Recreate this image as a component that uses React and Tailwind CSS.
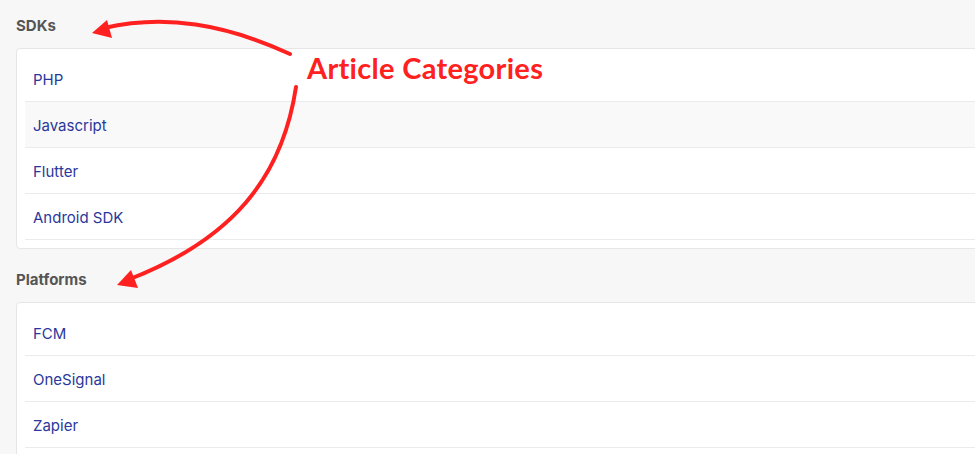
import React from 'react';

const groups = [
  { title: 'SDKs', items: ['PHP', 'Javascript', 'Flutter', 'Android SDK'] },
  { title: 'Platforms', items: ['FCM', 'OneSignal', 'Zapier'] },
];

function CategoryList({ title, items, first }) {
  return (
    <section className={first ? '' : 'mt-5'}>
      <h2 className="pl-4 text-[15px] font-bold leading-[22px] text-[#555555]">{title}</h2>
      <div className="ml-4 mt-[11px] w-[1100px] rounded border border-[#e6e6e6] bg-white px-2 pb-2 pt-[7px]">
        {items.map((item, i) => (
          <a
            key={item}
            href="#"
            className={`flex h-[46px] items-center border-b border-[#ebebeb] px-2 pt-[3px] text-[15px] text-[#2a389b] ${
              first && i === 1 ? 'bg-[#f9f9f9]' : ''
            }`}
          >
            {item}
          </a>
        ))}
      </div>
    </section>
  );
}

function Annotation() {
  return (
    <div className="pointer-events-none absolute inset-0">
      <svg width="975" height="454" className="absolute left-0 top-0">
        <path d="M290 54 C 225 24, 165 14, 104 28" fill="none" stroke="#ff2020" strokeWidth="4" strokeLinecap="round" />
        <polygon points="92,33 107,20 112,38" fill="#ff2020" />
        <path d="M296 87 C 282 180, 230 240, 130 279" fill="none" stroke="#ff2020" strokeWidth="4" strokeLinecap="round" />
        <polygon points="117,285 131,270 138,288" fill="#ff2020" />
      </svg>
      <div className="absolute left-[307px] top-[50px] text-[29px] font-bold leading-[36px] tracking-[0.3px] text-[#ff2020] [font-family:Lato,sans-serif]">
        Article Categories
      </div>
    </div>
  );
}

export default function App() {
  return (
    <div className="relative h-[454px] w-[975px] overflow-hidden bg-[#f7f7f7] pt-[15px] [font-family:Inter,sans-serif]">
      {groups.map((g, i) => (
        <CategoryList key={g.title} title={g.title} items={g.items} first={i === 0} />
      ))}
      <Annotation />
    </div>
  );
}
